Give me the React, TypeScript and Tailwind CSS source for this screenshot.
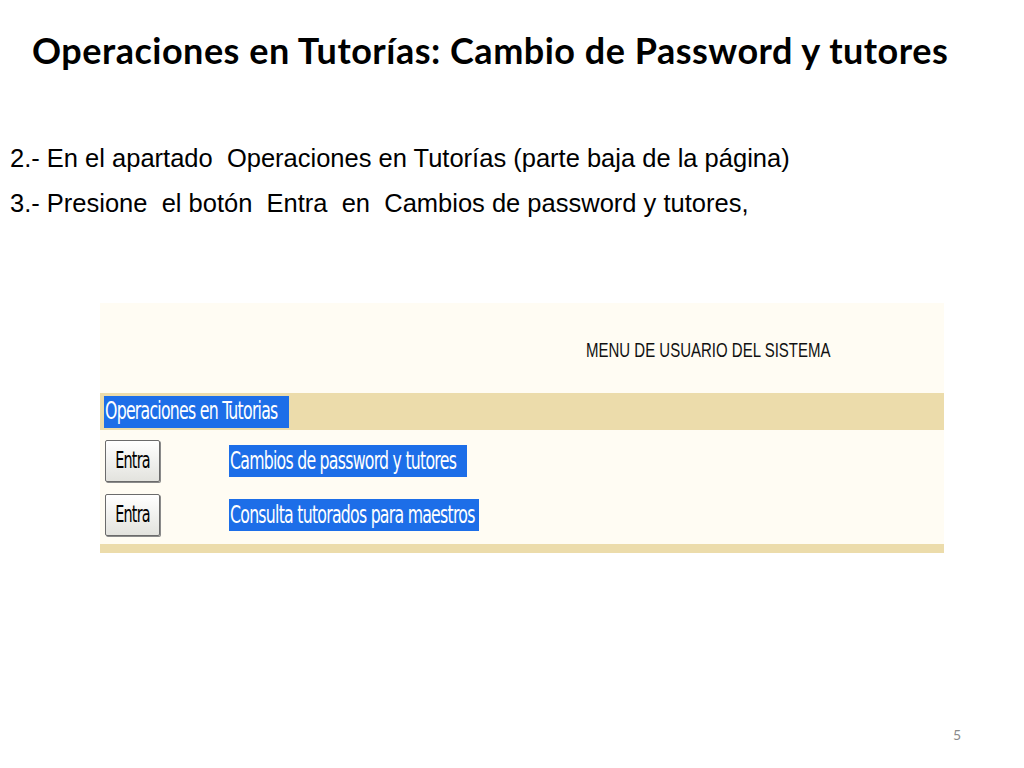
import React from "react";

const shot = "font-['DejaVu_Sans_Condensed','DejaVu_Sans',sans-serif]";

function EntraButton() {
  return (
    <div className="w-[55px] h-[42px] flex items-center justify-center rounded-[2px] border border-[#6b6b6b] bg-gradient-to-b from-[#ffffff] to-[#e3e3de] shadow-[1px_1px_0_#8a8a8a]">
      <span className={`${shot} text-[16px] text-black inline-block scale-y-[1.4] tracking-[-0.8px]`}>Entra</span>
    </div>
  );
}

function Highlight({ children, w }: { children: React.ReactNode; w: string }) {
  return (
    <div className={`h-[32px] ${w} bg-[#1d6ee8] flex items-center`}>
      <span className={`${shot} text-[17.5px] text-white inline-block scale-y-[1.4] whitespace-nowrap tracking-[-0.75px] pl-[1px]`}>
        {children}
      </span>
    </div>
  );
}

export default function App() {
  return (
    <div className="w-[1024px] h-[768px] bg-white relative overflow-hidden">
      <h1 className="pt-[28px] pl-[32px] font-['Lato',sans-serif] font-bold text-[36px] leading-[44px] text-black tracking-[0.5px] whitespace-nowrap">
        Operaciones en Tutorías: Cambio de Password y tutores
      </h1>

      <div className="mt-[71px] pl-[10px] font-['Liberation_Sans',Arial,sans-serif] text-[25.5px] leading-[30px] text-black flex flex-col gap-[15px]">
        <p className="whitespace-pre">2.- En el apartado  Operaciones en Tutorías (parte baja de la página)</p>
        <p className="whitespace-pre">3.- Presione  el botón  Entra  en  Cambios de password y tutores,</p>
      </div>

      <div className="mt-[85px] ml-[100px] w-[844px] h-[250px] bg-[#fffcf3] flex flex-col">
        <div className="h-[90px] flex items-center pl-[486px] pt-[6px]">
          <span className="font-['Liberation_Sans',sans-serif] text-[15px] text-[#111] inline-block scale-y-[1.3] tracking-[0px] whitespace-nowrap">
            MENU DE USUARIO DEL SISTEMA
          </span>
        </div>
        <div className="h-[37px] bg-[#ecdcab] flex items-center pl-[4px]">
          <Highlight w="w-[185px]">Operaciones en Tutorias</Highlight>
        </div>
        <div className="h-[54px] flex items-center pl-[5px] pt-[8px]">
          <EntraButton />
          <div className="ml-[69px]">
            <Highlight w="w-[238px]">Cambios de password y tutores</Highlight>
          </div>
        </div>
        <div className="h-[54px] flex items-center pl-[5px] pt-[8px]">
          <EntraButton />
          <div className="ml-[69px]">
            <Highlight w="w-[250px]">Consulta tutorados para maestros</Highlight>
          </div>
        </div>
        <div className="flex-1 flex flex-col justify-end">
          <div className="h-[9px] bg-[#ecdcab]" />
        </div>
      </div>

      <div className="absolute left-[953px] top-[724px] font-['Lato',sans-serif] text-[14px] text-[#8a8a8a]">5</div>
    </div>
  );
}
